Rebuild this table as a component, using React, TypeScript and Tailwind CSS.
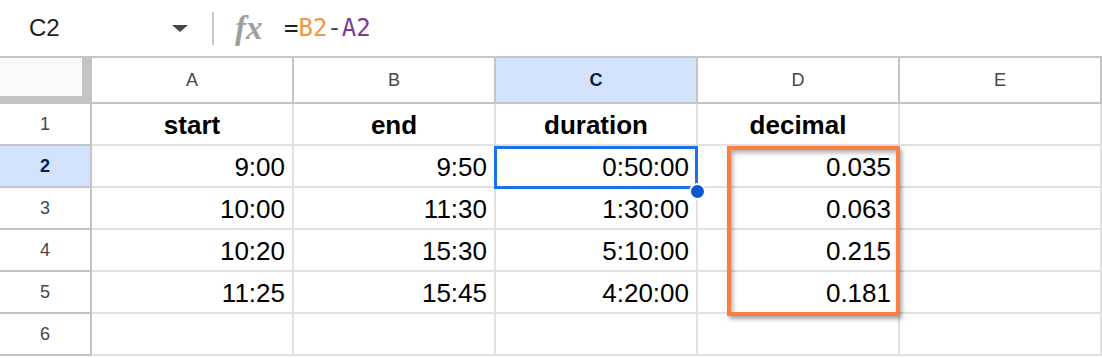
import React from 'react';

const COLS = ['A', 'B', 'C', 'D', 'E'];

// sheet data, header row first
const ROWS: string[][] = [
  ['start', 'end', 'duration', 'decimal', ''],
  ['9:00', '9:50', '0:50:00', '0.035', ''],
  ['10:00', '11:30', '1:30:00', '0.063', ''],
  ['10:20', '15:30', '5:10:00', '0.215', ''],
  ['11:25', '15:45', '4:20:00', '0.181', ''],
  ['', '', '', '', ''],
];

const FormulaBar: React.FC = () => (
  <div className="flex h-[58px] items-center border-b-2 border-[#c7c7c7] bg-white">
    <div className="w-[172px] pl-[29px] text-[24px] text-[#1f1f1f] [font-family:'Liberation_Sans',Arial,sans-serif]">
      C2
    </div>
    <div className="h-0 w-0 border-x-[8px] border-t-[7px] border-x-transparent border-t-[#444746]"></div>
    <div className="ml-[24px] h-[33px] w-[2px] bg-[#c7c7c7]"></div>
    <div className="ml-[21px] w-[29px] text-[33px] font-bold italic leading-none text-[#9e9e9e] [font-family:'Liberation_Serif',serif]">
      fx
    </div>
    <div className="ml-[20px] text-[24px] [font-family:'DejaVu_Sans_Mono',monospace]">
      <span className="text-[#1f1f1f]">=</span>
      <span className="text-[#f7943c]">B2</span>
      <span className="text-[#444746]">-</span>
      <span className="text-[#7b3a96]">A2</span>
    </div>
  </div>
);

export default function App() {
  return (
    <div className="h-[358px] w-[1102px] overflow-hidden bg-white [font-family:'Liberation_Sans',Arial,sans-serif]">
      <FormulaBar />
      <div className="relative">
        {/* column headers */}
        <div className="flex h-[46px]">
          <div className="flex h-[46px] w-[92px] bg-[#c4c4c4]">
            <div className="h-[38px] w-[82px] bg-[#f8f9fa]"></div>
          </div>
          {COLS.map((c) => (
            <div
              key={c}
              className={`flex w-[202px] items-center justify-center border-r-2 border-b-2 border-[#c4c4c4] text-[18px] ${
                c === 'C' ? 'bg-[#d3e3fd] font-bold text-[#041e49]' : 'bg-white text-[#444746]'
              }`}
            >
              {c}
            </div>
          ))}
        </div>

        {/* rows */}
        {ROWS.map((row, r) => (
          <div key={r} className="flex h-[42px]">
            <div
              className={`flex w-[92px] items-center justify-center border-r-2 border-b-2 border-[#c4c4c4] text-[18px] ${
                r === 1 ? 'bg-[#d3e3fd] font-bold text-[#041e49]' : 'bg-white text-[#444746]'
              }`}
            >
              {r + 1}
            </div>
            {row.map((v, c) => (
              <div
                key={c}
                className={`flex w-[202px] items-center border-r-2 border-b-2 border-[#e1e1e1] pt-[2px] text-[26px] text-black ${
                  r === 0 ? 'justify-center font-bold' : 'justify-end pr-[7px]'
                }`}
              >
                {v}
              </div>
            ))}
          </div>
        ))}

        {/* selected cell C2 with fill handle */}
        <div className="absolute left-[494px] top-[88px] z-10 h-[43px] w-[204px] border-[3px] border-[#1a73e8]"></div>
        <div className="absolute left-[689px] top-[125px] z-20 h-[17px] w-[17px] rounded-full border-2 border-white bg-[#0b57d0]"></div>

        {/* highlight around the decimal column */}
        <div className="absolute left-[727px] top-[88px] h-[170px] w-[173px] border-4 border-[#fb7f42] shadow-[2px_3px_4px_rgba(0,0,0,0.35),inset_2px_3px_4px_rgba(0,0,0,0.3)]"></div>
      </div>
    </div>
  );
}
